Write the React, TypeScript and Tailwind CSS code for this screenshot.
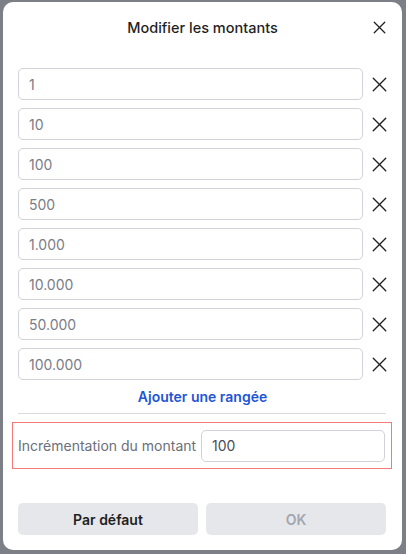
import { X } from "lucide-react"

const amounts = ["1", "10", "100", "500", "1.000", "10.000", "50.000", "100.000"]

export default function App() {
  return (
    <div
      className="w-[406px] h-[554px] bg-[#7c7f86] overflow-hidden pt-[2px] pl-[3px]"
      style={{ fontFamily: "Inter, 'Noto Sans', sans-serif" }}
    >
      <div className="w-[399px] h-[548px] rounded-[10px] bg-white px-[15px] flex flex-col">
        {/* Header */}
        <div className="relative h-[51px] flex items-center justify-center shrink-0">
          <h2 className="text-[14.5px] font-medium text-[#1f1f1f]">Modifier les montants</h2>
          <button className="absolute -right-[3px] top-[15px] text-[#1f1f1f]">
            <X className="w-[21px] h-[21px]" strokeWidth={1.5} />
          </button>
        </div>

        {/* Rows */}
        <div className="mt-[15px] flex flex-col gap-2">
          {amounts.map((a) => (
            <div key={a} className="flex items-center gap-[9px]">
              <div className="shrink-0 w-[345px] h-8 rounded-[5px] border border-[#d1d3dc] flex items-center px-[10px] text-[14px] text-[#7a7d87]">
                {a}
              </div>
              <button className="shrink-0 w-[14px] flex justify-center text-[#1f1f1f]">
                <X className="shrink-0 w-[25px] h-[25px]" strokeWidth={1.3} />
              </button>
            </div>
          ))}
        </div>

        <button className="mt-[6px] h-5 text-[14px] font-semibold text-[#1e55d6] self-center">
          Ajouter une rangée
        </button>

        <div className="mt-[7px] w-[368px] h-px bg-[#d9dbe1]" />

        {/* Increment */}
        <div className="mt-2 -mx-[6px] w-[380px] h-[47px] border border-[#f47a7a] flex items-center gap-[5px] pl-[5px] pr-[6px]">
          <span className="text-[14px] text-[#6b6f7b] whitespace-nowrap">Incrémentation du montant</span>
          <div className="flex-1 h-8 rounded-[5px] border border-[#d1d3dc] flex items-center px-[10px] text-[14px] text-[#4a4d57]">
            100
          </div>
        </div>

        {/* Footer */}
        <div className="mt-[34px] flex gap-2 w-[368px]">
          <button className="flex-1 h-8 rounded-[5px] bg-[#e6e7eb] text-[14px] font-semibold text-[#1f1f1f]">
            Par défaut
          </button>
          <button className="flex-1 h-8 rounded-[5px] bg-[#e6e7eb] text-[14px] font-semibold text-[#a3a6ae]">
            OK
          </button>
        </div>
      </div>
    </div>
  )
}
